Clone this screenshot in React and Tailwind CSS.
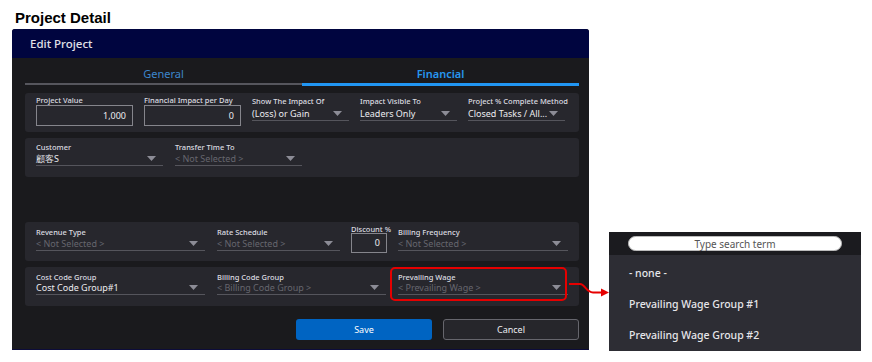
import React from 'react';

const Caret = () => (
  <svg width="9" height="5" viewBox="0 0 9 5" className="shrink-0">
    <path d="M0 0h9L4.5 5z" fill="#8c8c96" />
  </svg>
);

const Select = ({ label, value, placeholder, className = '', gap = 'mt-[1px]' }) => (
  <div className={`flex flex-col ${className}`}>
    <span className="text-[7.5px] leading-[10px] font-medium text-[#dcdce0] whitespace-nowrap">{label}</span>
    <div className={`${gap} h-[13px] flex items-center justify-between border-b border-[#55555c] pr-[7px]`}>
      {value ? (
        <span className="text-[9px] leading-[12px] text-[#ececf0] whitespace-nowrap">{value}</span>
      ) : (
        <span className="text-[9px] leading-[12px] text-[#66666e] whitespace-nowrap">{placeholder}</span>
      )}
      <div className="mb-[2px]">
        <Caret />
      </div>
    </div>
  </div>
);

const NumberBox = ({ label, value, className = '', boxClass = 'h-[21px]' }) => (
  <div className={`flex flex-col ${className}`}>
    <span className="text-[7.5px] leading-[9px] font-medium text-[#dcdce0] whitespace-nowrap">{label}</span>
    <div className={`${boxClass} border border-[#85858c] flex items-center justify-end pr-[6px]`}>
      <span className="text-[9px] text-[#ececf0]">{value}</span>
    </div>
  </div>
);

const Panel = ({ children, className = '' }) => (
  <div className={`bg-[#27272d] rounded-[3px] flex items-start pl-[11px] ${className}`}>{children}</div>
);

const App = () => {
  return (
    <div className="w-[872px] h-[362px] bg-white relative flex font-['Noto_Sans',sans-serif]">
      <div className="pl-[12px] flex flex-col">
        <h1 className="pt-[9px] pl-[3px] h-[27px] text-[15px] leading-[18px] font-bold text-black font-['Liberation_Sans',Arial,sans-serif]">
          Project Detail
        </h1>
        <div className="mt-[2px] w-[577px] h-[321px] bg-[#1a1a1d] rounded-t-[3px] flex flex-col border-b border-[#0c0c3a]">
          <div className="h-[29px] bg-[#00053f] rounded-t-[3px] flex items-center pl-[18px]">
            <span className="text-[11.5px] font-medium text-[#e2e2ea]">Edit Project</span>
          </div>

          <div className="flex flex-col pl-[13px] pr-[10px]">
            <div className="h-[28px] flex">
              <div className="flex-1 flex flex-col justify-end">
                <div className="flex-1 flex items-center justify-center pt-[7px]">
                  <span className="text-[11px] text-[#3d87cc]">General</span>
                </div>
                <div className="h-[2px] bg-[#56565d] mb-[1px]" />
              </div>
              <div className="flex-1 flex flex-col justify-end">
                <div className="flex-1 flex items-center justify-center pt-[7px]">
                  <span className="text-[11px] font-semibold text-[#2797ef]">Financial</span>
                </div>
                <div className="h-[3px] bg-[#2196f3]" />
              </div>
            </div>

            <Panel className="mt-[7px] h-[39px] pt-[3px] gap-[11px]">
              <NumberBox label="Project Value" value="1,000" className="w-[97px]" />
              <NumberBox label="Financial Impact per Day" value="0" className="w-[97px]" />
              <Select label="Show The Impact Of" value="(Loss) or Gain" className="w-[97px]" gap="mt-[2px]" />
              <Select label="Impact Visible To" value="Leaders Only" className="w-[97px]" gap="mt-[2px]" />
              <Select label="Project % Complete Method" value="Closed Tasks / All..." className="w-[97px]" gap="mt-[2px]" />
            </Panel>

            <Panel className="mt-[6px] h-[39px] pt-[4px] gap-[12px]">
              <Select label="Customer" value="顧客S" className="w-[127px]" />
              <Select label="Transfer Time To" placeholder="< Not Selected >" className="w-[127px]" />
            </Panel>

            <Panel className="mt-[45px] h-[39px] pt-[5px] gap-[12px]">
              <Select label="Revenue Type" placeholder="< Not Selected >" className="w-[169px]" />
              <Select label="Rate Schedule" placeholder="< Not Selected >" className="w-[123px]" />
              <div className="-mt-[2px] -ml-[1px] -mr-[1px]">
                <NumberBox label="Discount %" value="0" className="w-[36px]" boxClass="h-[20px] mt-[-1px]" />
              </div>
              <Select label="Billing Frequency" placeholder="< Not Selected >" className="w-[170px]" />
            </Panel>

            <Panel className="mt-[6px] h-[39px] pt-[5px] gap-[12px]">
              <Select label="Cost Code Group" value="Cost Code Group#1" className="w-[169px]" gap="mt-0" />
              <Select label="Billing Code Group" placeholder="< Billing Code Group >" className="w-[169px]" gap="mt-0" />
              <div className="relative">
                <Select label="Prevailing Wage" placeholder="< Prevailing Wage >" className="w-[170px]" gap="mt-0" />
                <div className="absolute left-[-8px] right-[1px] top-[-5px] bottom-[-6px] border-2 border-[#e60000] rounded-[5px]" />
              </div>
            </Panel>

            <div className="mt-[13px] flex justify-end gap-[11px]">
              <button className="w-[136px] h-[21px] bg-[#0064c2] rounded-[3px] text-[9px] text-white">Save</button>
              <button className="w-[136px] h-[21px] bg-[#26262b] border border-[#66666d] rounded-[3px] text-[9px] text-[#ececf0]">
                Cancel
              </button>
            </div>
          </div>
        </div>
      </div>

      <div className="ml-[20px] mt-[232px] w-[252px] h-[119px] flex flex-col">
        <div className="h-[23px] bg-[#1b1b1f] flex items-center justify-center">
          <div className="w-[214px] h-[15px] bg-white rounded-full border border-[#bbbbbb] flex items-center justify-center">
            <span className="text-[10px] leading-[12px] text-[#555555]">Type search term</span>
          </div>
        </div>
        <div className="flex-1 bg-[#2d2d34] pt-[3px] flex flex-col">
          <div className="h-[31px] flex items-center pl-[20px] text-[10.5px] font-medium text-[#e6e6ea]">- none -</div>
          <div className="h-[31px] flex items-center pl-[20px] text-[10.5px] font-medium text-[#e6e6ea]">Prevailing Wage Group #1</div>
          <div className="h-[31px] flex items-center pl-[20px] text-[10.5px] font-medium text-[#e6e6ea]">Prevailing Wage Group #2</div>
        </div>
      </div>

      <svg className="absolute left-[568px] top-[278px]" width="42" height="22" viewBox="0 0 42 22">
        <path d="M1 6 H12 C17 6 18 14.5 25 14.5 L35 14.5" fill="none" stroke="#e60000" strokeWidth="2" />
        <polygon points="33,10.5 41,14.5 33,18.5" fill="#e60000" />
      </svg>
    </div>
  );
};

export default App;
